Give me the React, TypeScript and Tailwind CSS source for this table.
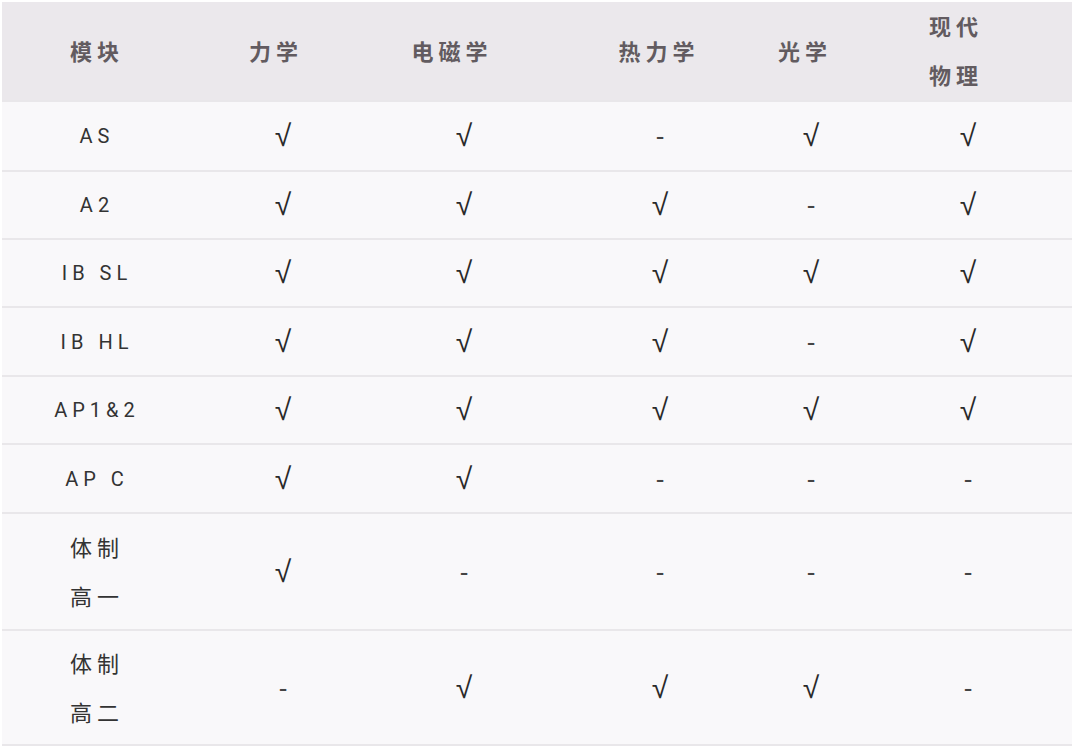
import React from "react";

const header = ["模块", "力学", "电磁学", "热力学", "光学", "现代\n物理"];

type Row = { name: string; cells: string[]; h: string };

const C = "√";
const D = "-";

const rows: Row[] = [
  { name: "AS", cells: [C, C, D, C, C], h: "h-[70px]" },
  { name: "A2", cells: [C, C, C, D, C], h: "h-[68px]" },
  { name: "IB SL", cells: [C, C, C, C, C], h: "h-[68px]" },
  { name: "IB HL", cells: [C, C, C, D, C], h: "h-[69px]" },
  { name: "AP1&2", cells: [C, C, C, C, C], h: "h-[68px]" },
  { name: "AP C", cells: [C, C, D, D, D], h: "h-[69px]" },
  { name: "体制\n高一", cells: [C, D, D, D, D], h: "h-[117px]" },
  { name: "体制\n高二", cells: [D, C, C, C, D], h: "h-[117px]" },
];

const colPad = ["pl-0", "pl-0", "pl-0", "pl-0", "pl-0", "pl-[8px]"];
const headPad = ["pr-0", "pr-[14px]", "pr-[24px]", "pr-[2px]", "pr-[12px]", "pr-[24px]"];

const font = { fontFamily: '"Noto Sans", "Noto Sans CJK SC", sans-serif' };

function Cell({ v, i }: { v: string; i: number }) {
  return (
    <div className={`flex items-center justify-center ${colPad[i]}`}>
      {v === C ? (
        <span
          className="text-[30px] leading-none text-[#2a2a2a]"
          style={{ fontFamily: '"Liberation Sans", sans-serif' }}
        >
          √
        </span>
      ) : (
        <span
          className="text-[26px] leading-none text-[#444]"
          style={{ fontFamily: '"Liberation Sans", sans-serif' }}
        >
          -
        </span>
      )}
    </div>
  );
}

export default function App() {
  return (
    <div className="w-[1080px] h-[750px] bg-white pt-[2px] pl-[2px]" style={font}>
      <div className="w-[1070px]">
        <div className="grid grid-cols-[190px_182px_180px_212px_90px_216px] h-[98px] bg-[#ebe8ec]">
          {header.map((h, i) => (
            <div key={i} className={`flex items-center justify-center ${colPad[i]} ${headPad[i]}`}>
              <div className="flex flex-col items-center text-[22px] font-bold leading-[49px] tracking-[5px] text-[#625b60]">
                {h.split("\n").map((l, j) => (
                  <span key={j}>{l}</span>
                ))}
              </div>
            </div>
          ))}
        </div>
        {rows.map((r, ri) => (
          <div
            key={ri}
            className={`grid grid-cols-[190px_182px_180px_212px_90px_216px] bg-[#f9f8fa] border-t-2 border-[#e9e7ea] ${r.h} ${
              ri === rows.length - 1 ? "border-b-2" : ""
            }`}
          >
            <div className="flex items-center justify-center">
              {r.name.includes("\n") ? (
                <div className="flex flex-col items-center text-[22px] leading-[49px] tracking-[5px] text-[#333]">
                  {r.name.split("\n").map((l, j) => (
                    <span key={j}>{l}</span>
                  ))}
                </div>
              ) : (
                <span
                  className="text-[20px] tracking-[5px] text-[#333] whitespace-pre"
                  style={{ fontFamily: "Roboto, sans-serif" }}
                >
                  {r.name}
                </span>
              )}
            </div>
            {r.cells.map((v, i) => (
              <Cell key={i} v={v} i={i + 1} />
            ))}
          </div>
        ))}
      </div>
    </div>
  );
}
